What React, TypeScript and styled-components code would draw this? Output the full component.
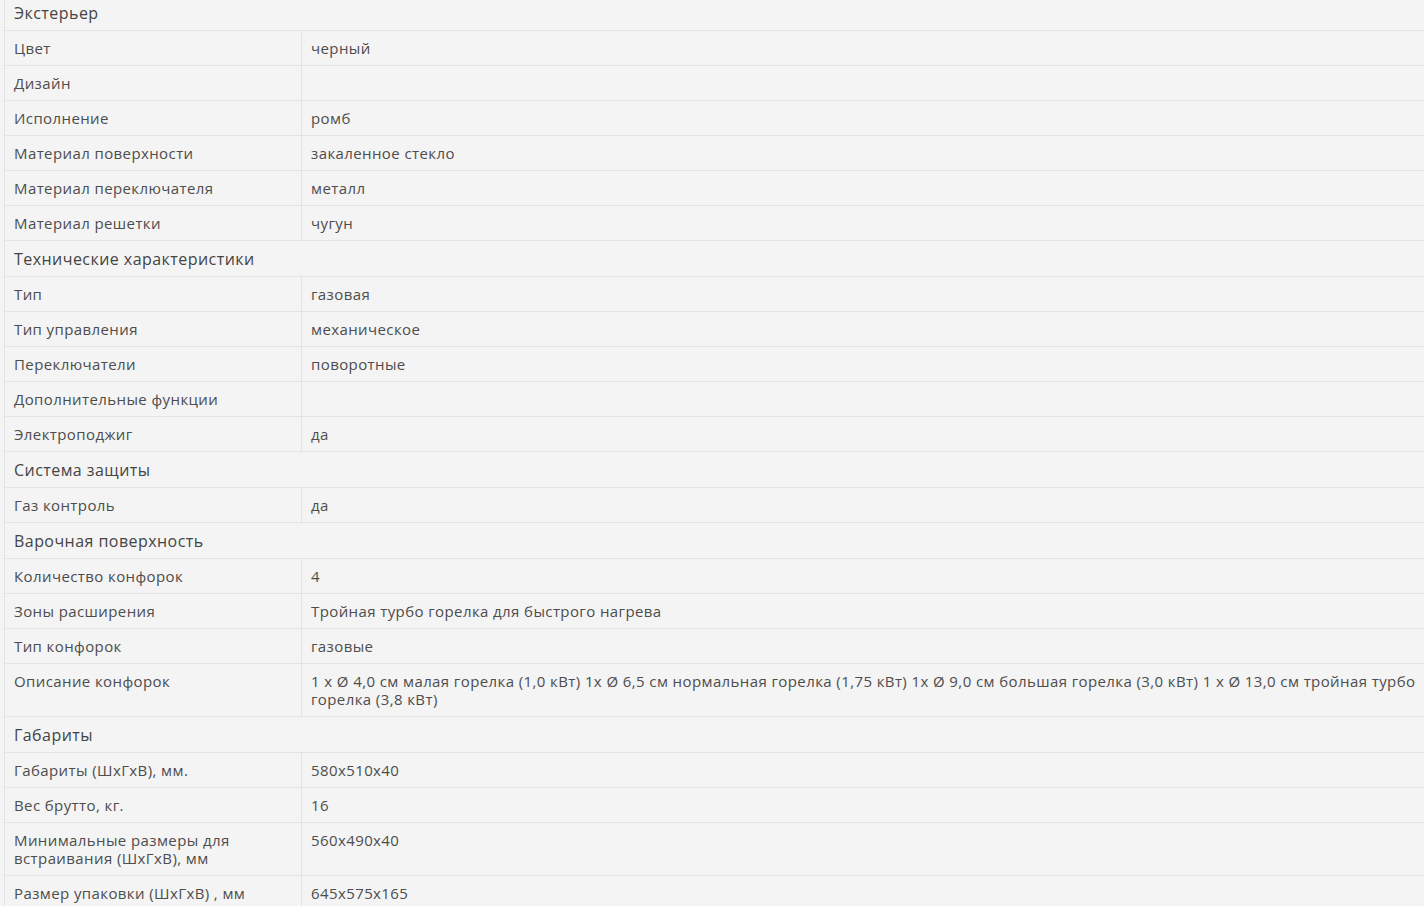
import React from "react";
import styled, { createGlobalStyle } from "styled-components";

type Spec = { name: string; value?: string };
type Group = { title: string; rows: Spec[] };

const groups: Group[] = [
  {
    title: "Экстерьер",
    rows: [
      { name: "Цвет", value: "черный" },
      { name: "Дизайн" },
      { name: "Исполнение", value: "ромб" },
      { name: "Материал поверхности", value: "закаленное стекло" },
      { name: "Материал переключателя", value: "металл" },
      { name: "Материал решетки", value: "чугун" },
    ],
  },
  {
    title: "Технические характеристики",
    rows: [
      { name: "Тип", value: "газовая" },
      { name: "Тип управления", value: "механическое" },
      { name: "Переключатели", value: "поворотные" },
      { name: "Дополнительные функции" },
      { name: "Электроподжиг", value: "да" },
    ],
  },
  {
    title: "Система защиты",
    rows: [{ name: "Газ контроль", value: "да" }],
  },
  {
    title: "Варочная поверхность",
    rows: [
      { name: "Количество конфорок", value: "4" },
      { name: "Зоны расширения", value: "Тройная турбо горелка для быстрого нагрева" },
      { name: "Тип конфорок", value: "газовые" },
      {
        name: "Описание конфорок",
        value:
          "1 x Ø 4,0 см малая горелка (1,0 кВт) 1х Ø 6,5 см нормальная горелка (1,75 кВт) 1х Ø 9,0 см большая горелка (3,0 кВт) 1 x Ø 13,0 см тройная турбо горелка (3,8 кВт)",
      },
    ],
  },
  {
    title: "Габариты",
    rows: [
      { name: "Габариты (ШхГхВ), мм.", value: "580x510x40" },
      { name: "Вес брутто, кг.", value: "16" },
      { name: "Минимальные размеры для встраивания (ШхГхВ), мм", value: "560x490x40" },
      { name: "Размер упаковки (ШхГхВ) , мм", value: "645x575x165" },
    ],
  },
];

const GlobalStyle = createGlobalStyle`
  html, body {
    margin: 0;
    background: #f4f4f4;
    overflow: hidden;
  }
  body {
    font-family: "Open Sans", "Noto Sans", sans-serif;
    color: #4d4d4d;
  }
`;

const Page = styled.div`
  padding-left: 4px;
  margin-top: -5px;
`;

const Table = styled.table`
  width: 1428px;
  border-collapse: collapse;
  table-layout: fixed;
  border-left: 1px solid #e3e3e3;
`;

const NameCol = styled.col`
  width: 297px;
`;

const GroupCell = styled.th`
  text-align: left;
  font-weight: 400;
  font-size: 16px;
  letter-spacing: 0.45px;
  line-height: 19px;
  height: 19px;
  color: #444;
  padding: 9px 9px 7px;
  border-bottom: 1px solid #e3e3e3;
`;

const Cell = styled.td<{ $value?: boolean }>`
  vertical-align: top;
  font-size: 15px;
  letter-spacing: 0.4px;
  line-height: 18px;
  padding: 8px 9px;
  border-bottom: 1px solid #e3e3e3;
  border-right: ${(p) => (p.$value ? "none" : "1px solid #e3e3e3")};
  color: #4d4d4d;
`;

export default function App() {
  return (
    <Page>
      <GlobalStyle />
      <Table>
        <colgroup>
          <NameCol />
          <col />
        </colgroup>
        <tbody>
          {groups.map((g) => (
            <React.Fragment key={g.title}>
              <tr>
                <GroupCell colSpan={2}>{g.title}</GroupCell>
              </tr>
              {g.rows.map((r) => (
                <tr key={r.name}>
                  <Cell>{r.name}</Cell>
                  <Cell $value>{r.value ?? ""}</Cell>
                </tr>
              ))}
            </React.Fragment>
          ))}
        </tbody>
      </Table>
    </Page>
  );
}
